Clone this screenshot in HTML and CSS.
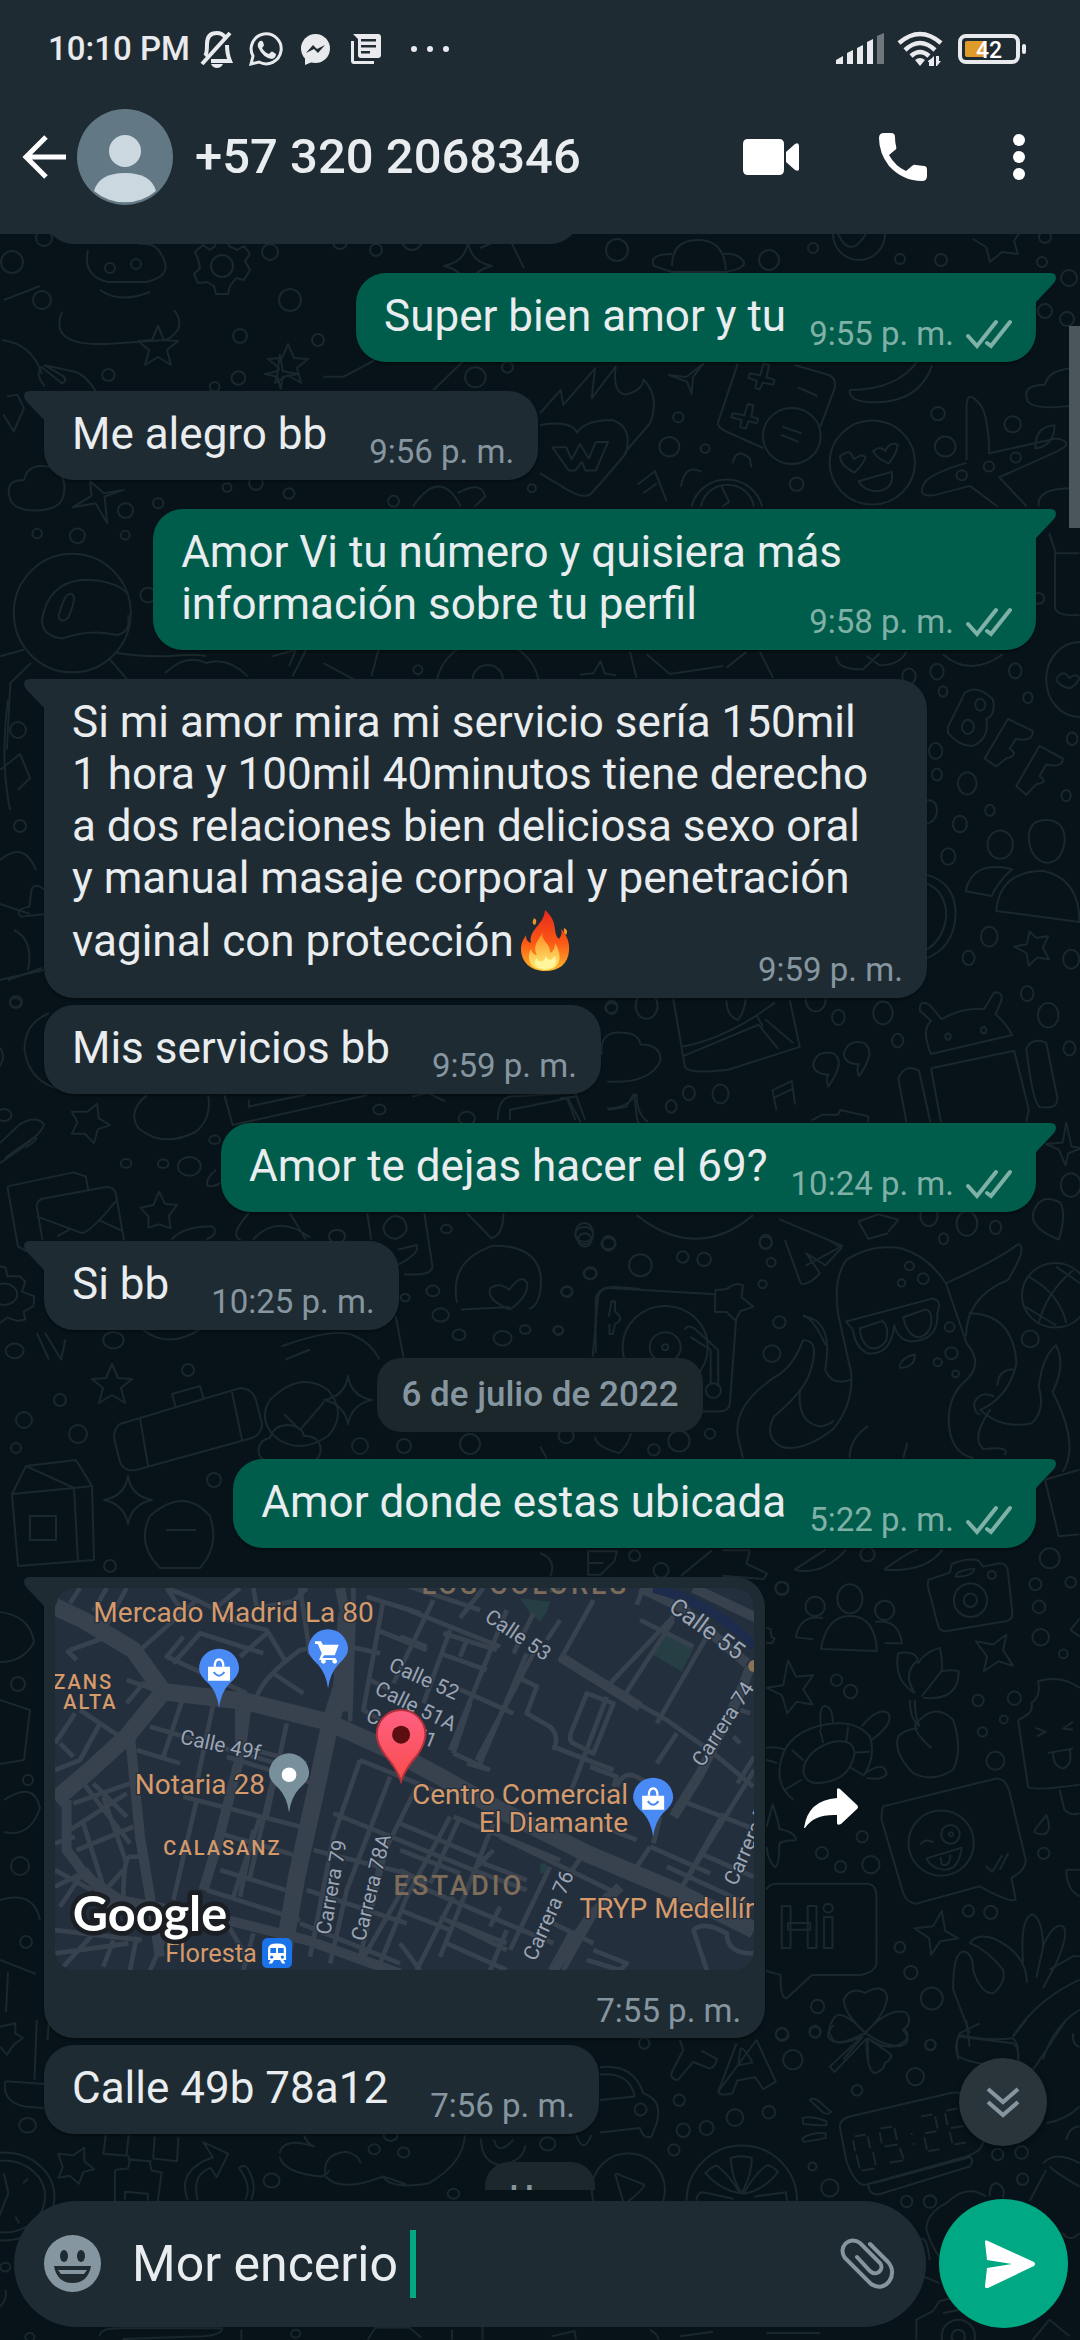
FILE: index.html
```html
<!DOCTYPE html>
<html lang="es">
<head>
<meta charset="UTF-8">
<meta name="viewport" content="width=device-width, initial-scale=1.0">
<title>Chat</title>
<link rel="stylesheet" href="styles.css">
</head>
<body>

<!-- Fondo con dibujos -->
<svg class="wallpaper" viewBox="0 0 1080 2340" preserveAspectRatio="xMidYMin slice" aria-hidden="true">
  <defs>
    <path id="star" d="M0-20 6-6 20-5 9 4 13 19 0 11-13 19-9 4-20-5-6-6Z"/>
    <path id="spark" d="M0-24Q3-4 24 0 4 4 0 24-4 4-24 0-3-4 0-24Z"/>
    <path id="cloud" d="M-22 14C-36 10-34-8-20-10-16-28 12-26 14-12 34-14 36 12 20 14Q0 20-22 14Z"/>
    <path id="note" d="M-8 14V-14L14-20V8M-8-6 14-12M-8 14A6 5 0 1 1-14 9Q-10 9-8 14M14 8A6 5 0 1 1 8 3Q12 3 14 8"/>
    <path id="heart" d="M0 14C-30-6-14-24 0-10 14-24 30-6 0 14Z"/>
    <g id="people"><ellipse cy="-34" rx="13" ry="15"/><path d="M-30 18Q-24-16 0-16 26-16 28 20Z"/><circle cx="-36" cy="-26" r="10"/><path d="M-38 8-56 6Q-52-18-28-14"/><circle cx="36" cy="-22" r="10"/><path d="M36 12 54 12Q50-14 26-10"/></g>
    <g id="gear"><path d="M-5-28H5L7-20 15-16 22-20 28-12 23-5 28 4 22 14 14 12 8 20 6 28H-6L-8 20-15 16-24 17-28 8-22 2-24-7-27-14-19-21-12-16-7-20Z"/><circle r="11"/></g>
  </defs>

  <!-- zona superior -->
  <use href="#gear" x="222" y="266"/><use href="#spark" x="468" y="266"/>
  <path d="M88 250q-6 26 20 32l38 0q28-6 16-26-6-14-22-12-2-22-24-18-18 2-14 18M62 312q-14 34 44 32l60-4q22-12 8-30M100 290q20 14 50 2"/>
  <circle cx="110" cy="268" r="5"/><circle cx="136" cy="264" r="5"/>
  <circle cx="270" cy="252" r="8"/><circle cx="44" cy="238" r="8"/><circle cx="340" cy="242" r="7"/><circle cx="376" cy="250" r="6"/><circle cx="412" cy="240" r="10"/><circle cx="12" cy="262" r="11"/><circle cx="290" cy="300" r="11"/><circle cx="42" cy="300" r="9"/><circle cx="318" cy="340" r="6"/><circle cx="240" cy="336" r="7"/>
  <use href="#star" x="288" y="364"/><use href="#star" x="158" y="346"/>
  <path d="M2 340q30 4 40 34M4 300l36-14M480 248l28-12 16 32"/>
  <g transform="translate(600)">
    <circle cx="17" cy="250" r="11"/><circle cx="169" cy="260" r="10"/><circle cx="213" cy="248" r="5"/><circle cx="300" cy="259" r="5"/><circle cx="341" cy="260" r="6"/><circle cx="442" cy="262" r="5"/><circle cx="445" cy="237" r="6"/><circle cx="469" cy="278" r="8"/><circle cx="445" cy="311" r="7"/><circle cx="467" cy="319" r="7"/>
    <path d="M72 266q0-26 26-26t28 30M72 254q-24 0-18 12l18 6h54q20-4 18-10-6-10-22-8M233 234a26 26 0 1 0 52 0M238 234q12 26 28 0M373 239l13 8 4 15 12-10 16 2-4-13 6-9"/>
  </g>

  <!-- zona "Me alegro" -->
  <g transform="translate(0 360) scale(.344 .333)">
    <circle cx="315" cy="45" r="18"/><circle cx="693" cy="54" r="20"/><circle cx="624" cy="80" r="14"/><circle cx="1382" cy="52" r="30"/><circle cx="1475" cy="22" r="16"/><circle cx="660" cy="383" r="13"/><circle cx="744" cy="370" r="20"/><circle cx="840" cy="401" r="16"/><circle cx="460" cy="430" r="15"/><circle cx="365" cy="452" r="22"/><circle cx="108" cy="521" r="14"/><circle cx="225" cy="528" r="22"/><circle cx="364" cy="526" r="13"/><circle cx="1144" cy="424" r="16"/><circle cx="1546" cy="385" r="12"/><circle cx="1215" cy="930" r="13"/><circle cx="430" cy="706" r="22"/>
    <path d="M120 20q-20 20 10 60M120 20l60 50q20-10 0-24l-50-30 90 20q30 10 60 60M30 420q-20-60 40-60 10-50 70-40 60 20 44 90-10 40-80 42-60 0-74-32ZM770 42l36-8 8-50 8 50 46 8-46 8-6 36-10-36ZM360 390l-56 20 8 80-34-60-66 12 54-34-4-44 40 36ZM940 50l60 0 90-50M1260 90l100-100M1200 440q80-120 140 0M1330 400q70-40 80 10l-30 30M20 110l30-6 20 40-30 70-30-50"/>
    <ellipse cx="210" cy="760" rx="170" ry="178"/><path d="M370 700q-40-40-130-40-100 10-118 120 0 50 60 56 80-30 160-10 40-10 30-60M170 770q20-80 40-66 14 10-12 70-20 20-28-4M0 890l70-20M340 880q60 10 140 10 100-10 120 0M320 900l50 60M90 910l-60 60-10 200M480 940q60-60 120-30 60-20 120 40M790 890l70-20-20 50M850 950l40-80M940 910l90 50M1080 950l20-80"/>
    <circle cx="1418" cy="960" r="44"/><circle cx="1418" cy="990" r="150"/>
  </g>
  <g transform="translate(540 360) scale(.344 .333)">
    <path d="M0 160 60 90 68 135 160 25 150 115 220 20Q210 100 250 104 300 90 300 58 350 110 320 190L245 280M0 195Q90 180 108 218 130 180 210 180 270 200 250 280 210 330 150 400 130 420 80 390L0 340M36 262h40l16 36 24-46 26 44 20-50h36l-36 86h-30l-10-26-20 26H84Z"/>
    <path d="M375 45l50 6 50-40-30 40-4 50-14-36ZM575 10 520 180Q510 200 540 214L650 265M740 15 840 45Q865 60 855 90L815 200M610 40l30 6 10-36 16 6-8 36 24 8-4 14-30-6-10 20-12-4 4-22-24-8ZM560 160l34 6 10-34 16 4-6 34 20 6-4 14-24-6-8 22-16-4 4-22-30-8Z"/>
    <circle cx="732" cy="228" r="84"/><path d="M704 200l56 20M700 224l52 22M750 82l56 26M900 90q-4 30 50 36 150 10 190-110M900 90q140 0 200-90"/>
    <ellipse cx="966" cy="308" rx="124" ry="126"/><path d="M872 290q30-30 40 8 30-20 34-4-10 24-32 44-40-20-42-48ZM968 274q20-20 36 0 10-30 36-20-4 30-26 56-30-10-46-36ZM926 364l96-28q10 50-40 58-40 0-56-30Z"/>
    <path d="M1240 300V140q0-60 44 0 20 40 22 140L1500 236q60 10 0 40L1335 352 1415 440M1330 440 1250 378 1150 405q-60 10-30-40 30-30 120-56M1440 260q0-60 56-64 0 60-56 70ZM1568 24q-90 0-100 50-70 0-50 50 20 30 150 10M1450 440q-10-60 118-54M1480 520l20 60h68M1497 580v160q0 30 71 26"/>
    <circle cx="402" cy="172" r="15"/><circle cx="376" cy="260" r="29"/><circle cx="480" cy="266" r="13"/><circle cx="746" cy="373" r="20"/><circle cx="1157" cy="161" r="20"/><circle cx="1178" cy="260" r="30"/><circle cx="1374" cy="193" r="24"/><circle cx="1383" cy="293" r="15"/><circle cx="1305" cy="320" r="15"/><circle cx="1226" cy="346" r="15"/><circle cx="1450" cy="716" r="16"/>
    <path d="M440 440a106 106 0 0 1 206 0M468 440a78 78 0 0 1 154 0M526 376l24 50-20 14M410 380q10-70 60-44M560 310q10-50 50-14l4 26M284 374l50-40 34 90M300 400l40-30"/>
  </g>

  <!-- margen izquierdo y derecho del mensaje largo -->
  <path d="M8 700q-8 60 2 110M0 860q24-20 36 10M0 904l30 10M0 770l20-16 10 24-12 12M8 980l34-12M0 1048q6 8 0 18M14 930q20 10 14 40"/>
  <circle cx="18" cy="730" r="8"/><circle cx="20" cy="826" r="6"/><circle cx="16" cy="1002" r="6"/>
  <g transform="translate(560 640) scale(.333 .395)">
    <circle cx="1048" cy="92" r="20"/><circle cx="1132" cy="80" r="20"/><circle cx="1150" cy="130" r="13"/><circle cx="1367" cy="78" r="19"/><circle cx="1405" cy="146" r="14"/><circle cx="1128" cy="281" r="20"/><circle cx="1132" cy="341" r="15"/><circle cx="1223" cy="363" r="28"/><circle cx="1291" cy="431" r="14"/><circle cx="1201" cy="466" r="21"/><circle cx="1166" cy="548" r="21"/><circle cx="1520" cy="394" r="14"/><circle cx="1538" cy="250" r="16"/><circle cx="1289" cy="751" r="25"/><circle cx="1227" cy="805" r="18"/><circle cx="1535" cy="808" r="24"/><circle cx="1403" cy="895" r="19"/><circle cx="1466" cy="950" r="31"/><circle cx="970" cy="944" r="29"/><circle cx="1014" cy="1014" r="17"/><circle cx="836" cy="955" r="19"/><circle cx="768" cy="910" r="30"/><circle cx="260" cy="926" r="33"/><circle cx="155" cy="930" r="17"/><circle cx="387" cy="1147" r="18"/><circle cx="334" cy="1181" r="16"/><circle cx="482" cy="1149" r="24"/><circle cx="1530" cy="1034" r="18"/><circle cx="73" cy="1503" r="27"/><circle cx="146" cy="1527" r="19"/><circle cx="618" cy="1524" r="18"/><circle cx="1108" cy="1458" r="26"/><circle cx="1222" cy="1477" r="31"/><circle cx="1308" cy="1487" r="17"/><circle cx="1152" cy="1516" r="14"/><circle cx="1534" cy="1380" r="30"/>
    <path d="M1165 220 1215 135Q1250 110 1300 150 1310 190 1280 200 1290 250 1240 268 1200 270 1165 235ZM1275 300 1345 200 1420 230Q1420 260 1370 250L1350 275Q1380 290 1340 300L1310 320ZM1370 370 1440 268 1510 300Q1510 325 1460 315L1440 345Q1470 360 1430 365L1400 392Z"/><circle cx="1262" cy="164" r="15"/><circle cx="1225" cy="220" r="18"/>
    <ellipse cx="1560" cy="100" rx="100" ry="95"/><path d="M1490 100q20-30 40-4 20-14 30 0-10 20-30 26-30-4-40-22M1100 405q34 0 32 30-4 26-32 30M1100 594q90 20 88 104-6 80-88 108M1100 616q60 20 60 84-10 60-60 84"/>
    <ellipse cx="1322" cy="518" rx="38" ry="36"/><path d="M1408 500q0-44 52-44 54 0 56 50-8 58-56 58-50-10-52-64ZM1218 636q20-80 140-56-40 30-62 68ZM1310 686q10-100 140-102 110 20 110 130Z"/>
    <path d="M1364 776 1402 770 1410 738 1430 754 1466 750 1450 778 1468 808 1434 804 1408 824 1400 792ZM1114 1048q-30-60 0-84L1080 938q0-30 30-14l36 36q60-30 128-26l30-42q30 0 20 24l-16 32q30 20 50 52ZM1114 1084 1364 1040 1408 1190 1400 1220M1114 1084 1144 1220M1400 1034q20-30 60-14l34 140q0 30-54 22-20-10-40-148M1040 1220 1016 1110q20-40 62-20l34 130"/><circle cx="1165" cy="1004" r="8"/><circle cx="1272" cy="988" r="8"/>
    <path d="M126 1050q-10-60 60-56 50 0 56 30 60 0 60 40-30 60-160 54M340 908 375 1080q10 20 130 8L720 1030 690 912M364 1030Q500 1010 645 918M368 1054 596 974 656 1036M616 960 700 1020M590 950l20 30M500 912q0 40 34 50 20-20 24-54M760 1076q10-40 60-30 40 20-14 84-10-20 0-30-40 0-46-24ZM852 1050q10-40 60-30 40 20-14 84-10-20 0-30-40 0-46-24M650 1190l-12-50 58-24 10 60M640 1160l60-24M140 1186q60 0 90-36 0 50 34 70M756 1216l30-14h48l8-12 84 16v14M22 1158l40 62M0 1160l50-4M230 1456q180 120 350 0M658 1466l190 68-110 50M896 1472l60-18 60 14-30 30M896 1472l30 44 60-14M1498 1518q-90-30-76-70 20-50 80-24 20 30-4 94ZM1460 1276l50-4 10-50 16 60 30 4-40 14-8 30-20-40ZM60 88l40-4 22-30 12 30 34 6M210 30l20 66M260 36l70 50 160-20M600 30l40 66M500 70l60-40M830 40q0 36 80 34l50-40M920 40l40 24q60 0 80-34M1150 36q80 60 180 0"/>
  </g>

  <!-- zona "Si bb" -->
  <g transform="translate(0 880) scale(.408 .333)">
    <circle cx="38" cy="368" r="14"/><circle cx="10" cy="706" r="18"/><circle cx="309" cy="851" r="13"/><circle cx="400" cy="852" r="13"/><circle cx="464" cy="860" r="28"/><circle cx="526" cy="780" r="13"/><circle cx="930" cy="689" r="15"/><circle cx="1144" cy="716" r="20"/><circle cx="1498" cy="384" r="15"/><circle cx="1094" cy="1048" r="13"/><circle cx="1432" cy="1064" r="22"/><circle cx="1491" cy="1092" r="17"/><circle cx="1446" cy="1182" r="16"/><circle cx="1061" cy="1234" r="16"/><circle cx="1389" cy="1236" r="14"/><circle cx="1080" cy="1306" r="20"/><circle cx="1125" cy="1366" r="16"/><circle cx="1232" cy="1376" r="22"/><circle cx="1287" cy="1350" r="13"/><circle cx="1368" cy="1352" r="12"/><circle cx="993" cy="1254" r="11"/><circle cx="278" cy="1382" r="25"/><circle cx="36" cy="1414" r="22"/><circle cx="826" cy="1070" r="20"/>
    <path d="M110 30q-30-30-34 10l-4 40q-40 10-20 30l60-8M0 300l108-30M120 400q-60 30-60 110 10 90 80 116M176 696l38 0 24-24 4 44 28 20-30 12-10 42-22-28-32 0 14-34ZM360 646q-50 50-20 100 60 60 140 10 40-40 30-110M0 850q100-80 108-116-20-30-60 0L0 790M12 834l70-60q20 0-20 30M550 646l20 90 330-90M610 680l140-36M610 660v24M1220 720q0-60 30-70l160-10 24 80M1250 720v-30l140-34 20 64M1490 690l44-8 20-40 8 80 8 20M1010 650l40-10 40 24"/>
    <path d="M18 920 180 878 210 890 216 930M18 920 44 1100 66 1116M90 980q0-20 20-24l150-34q20 0 24 20l20 140M90 980l14 100M90 1010l110 50q20 0 84-96M140 1070l30-20M240 1020l60 34M344 984l32-8 14-40 14 36 30 4-20 32 4 38-28-12-26 10 0-34ZM590 1080q-30-10 20-80M710 1000l40 80M620 1080q60-80 140-6M420 1080q30-40 100-40 20 20-14 40M530 870q-30 30-20 50 20 0 30-10M900 1000l10 80M940 1040q20-50 50-20 20 40-20 58-30-4-30-38M1040 1000l20 160q0 30-70 24M975 1110l46-14q10 24-46 60M1144 1000l60 76q30-10 30-76M1120 1270q-20-130 90-172 110 0 116 100 0 80-30 90M1130 1290l120-8M1250 1290q-60-30-48-64 20-20 46 4 30-50 44-20 4 40-42 80Z"/>
    <path d="M0 1160l14 4 4 26 30 0 14 16-8 30 30 14-2 30-24 16 4 24-20 4-24-10-18 16"/><circle cx="10" cy="1244" r="32"/>
    <path d="M90 1360l30 80M110 1360l40 80 10-60M350 1350q60 60 140 0M690 1400q140-60 180-30 40 20 60 70M700 1440l60-30M970 1310l20 130M1460 1420v-160q4-40 50-38l60 6"/>
  </g>
  <!-- zona de la fecha -->
  <path d="M12 1494 26 1466 76 1460 92 1486 94 1560 18 1566ZM12 1494 74 1488 92 1486M74 1488 78 1562M26 1466 74 1488M30 1516h26v24H30Z"/>
  <path d="M120 1424 240 1388Q252 1388 256 1400L262 1424Q262 1434 252 1438L136 1470Q124 1472 120 1462L114 1438Q114 1428 120 1424ZM140 1418 148 1466M232 1392 242 1440M176 1408l-4-14 28-8 4 14"/>
  <path d="M150 1516q34-30 60 0 10 30-10 52h-40q-24-24-10-52M166 1530h30M270 1400q30-30 58-10 20 24 0 46-30 20-54 0-16-18-4-36M284 1414l16 16 24-28M300 1472l60 16M236 1480q20-14 40 0"/>
  <use href="#star" x="112" y="1384"/><use href="#spark" x="348" y="1400"/><use href="#spark" x="128" y="1500"/><use href="#cloud" x="290" y="1448"/>
  <circle cx="24" cy="1420" r="8"/><circle cx="60" cy="1400" r="6"/><circle cx="78" cy="1434" r="9"/><circle cx="214" cy="1480" r="7"/><circle cx="360" cy="1446" r="8"/><circle cx="188" cy="1370" r="6"/><circle cx="16" cy="1448" r="5"/><circle cx="110" cy="1566" r="6"/><circle cx="404" cy="1446" r="7"/><circle cx="470" cy="1444" r="10"/>
  <!-- margen izquierdo del mapa -->
  <path d="M0 1612q30 4 34 30-10 20-34 20M0 1700l30 10-6 50-24 4M4 1800q30-20 36 8-10 30-36 24M0 1900q34-10 40 20M0 1960l36 14M8 1972l-2 40"/>
  <circle cx="18" cy="1684" r="7"/><circle cx="28" cy="1780" r="5"/><circle cx="20" cy="1866" r="9"/><circle cx="26" cy="1942" r="6"/>

  <g transform="translate(540 1240) scale(.344 .333)">
    <circle cx="130" cy="0" r="20"/><circle cx="200" cy="10" r="20"/><circle cx="292" cy="76" r="33"/><circle cx="415" cy="51" r="17"/><circle cx="477" cy="58" r="20"/><circle cx="147" cy="100" r="18"/><circle cx="79" cy="155" r="16"/><circle cx="54" cy="272" r="13"/><circle cx="656" cy="8" r="18"/><circle cx="672" cy="67" r="13"/><circle cx="647" cy="133" r="12"/><circle cx="696" cy="247" r="18"/><circle cx="674" cy="341" r="25"/><circle cx="1074" cy="78" r="13"/><circle cx="1114" cy="116" r="16"/><circle cx="1051" cy="129" r="11"/><circle cx="1191" cy="261" r="14"/><circle cx="1196" cy="340" r="18"/><circle cx="1156" cy="367" r="12"/><circle cx="1208" cy="402" r="10"/><circle cx="1425" cy="297" r="25"/><circle cx="494" cy="582" r="15"/><circle cx="404" cy="604" r="31"/><circle cx="331" cy="630" r="17"/><circle cx="76" cy="588" r="22"/><circle cx="275" cy="948" r="16"/><circle cx="352" cy="992" r="22"/><circle cx="703" cy="1046" r="18"/><circle cx="952" cy="944" r="21"/>
    <path d="M153 350 168 180Q170 140 210 145L510 163M570 240 552 490Q550 515 520 515H470M510 150q36 0 42-10 20-14 38-4l-4 36 34 28-38 14-14 28-26-26-34 0ZM200 230l8-46h10l0 30q30 26 0 38l-6 30-10 0V252"/><circle cx="364" cy="322" r="124"/><circle cx="364" cy="322" r="45"/><circle cx="364" cy="322" r="9"/><path d="M420 270q10-20 34 0l64 60v110M436 290l60 40v100"/><circle cx="504" cy="452" r="22"/>
    <path d="M712 0l46 130q20 10 56-30l-40-60 56 36 46-52-30-20M868 230Q850 120 890 60 960 10 1050 25 1130 50 1180 130L1240 310Q1290 370 1240 420 1190 460 1188 540 1190 640 1260 655M868 230 905 400Q910 500 850 570 760 640 700 620 650 590 680 530 760 460 780 410 820 300 765 300 740 370 700 400 560 490 575 590L590 655M765 230q90 10 64 160 20 50 74 30M756 450q-10 100 60 110 40-10 36-20M765 226q30 10 66 90"/>
    <path d="M890 245 1140 176Q1170 180 1155 220 1160 300 1080 305 1040 300 1030 255 1020 350 950 340 915 320 910 270ZM930 265l66-22q20 20 10 60-20 30-50 20-26-20-26-58ZM1056 232l66-24q20 6 14 50-10 34-40 34-30-10-40-60ZM1044 380q10-30 46-36 0 40-46 40M1180 130Q1330 60 1390 12 1420 20 1360 120 1240 170 1238 290M1245 220q130 0 140 150-20 100-105 140 60 60 150 40 40-40 20-110 10-90 50-124 30 60-10 140 80 160 30 240M1310 508q-60 90-20 120 80-10 60 18M1380 388q-50 0-50 50M1320 470q-40-20-58 20 0 30 18 34M900 655q0-60 54-96M1056 655l12-46M0 620l20 36M160 590q0 30 70 50 30-30 34-60"/>
    <circle cx="1498" cy="166" r="97"/><path d="M1420 110q90 50 110 140M1450 250q20-90 100-160M1410 200l90 56M1500 80l70 50"/>
    <path d="M410 1008l90-76M530 932l80 0-10 40 60 30-10 16-120-10M140 935h84l-8 30-40 40-36 0ZM140 970h44M740 990q60-40 90-60M740 990q80 20 150-60M1000 990q80-60 100-60M1000 990q120 10 170-60M1468 720l100-30M1468 720l40 170 60-6M0 940q50 20 30 70"/>
  </g>

  <!-- a la derecha del mapa -->
  <g transform="translate(740 1540) scale(.333)">
    <circle cx="126" cy="145" r="20"/><circle cx="930" cy="55" r="30"/><circle cx="887" cy="133" r="18"/><circle cx="993" cy="127" r="16"/><circle cx="898" cy="201" r="19"/><circle cx="903" cy="292" r="25"/><circle cx="290" cy="421" r="17"/><circle cx="332" cy="455" r="20"/><circle cx="715" cy="482" r="17"/><circle cx="824" cy="475" r="20"/><circle cx="792" cy="539" r="12"/><circle cx="728" cy="576" r="14"/><circle cx="767" cy="663" r="27"/><circle cx="367" cy="891" r="17"/><circle cx="246" cy="940" r="18"/><circle cx="302" cy="981" r="17"/><circle cx="393" cy="975" r="26"/><circle cx="912" cy="941" r="17"/><circle cx="686" cy="1114" r="17"/><circle cx="753" cy="1118" r="20"/><circle cx="480" cy="1223" r="16"/><circle cx="513" cy="1299" r="20"/><circle cx="576" cy="1377" r="33"/><circle cx="233" cy="1401" r="20"/><circle cx="225" cy="1476" r="17"/><circle cx="126" cy="1483" r="18"/><circle cx="971" cy="342" r="13"/><circle cx="572" cy="1516" r="15"/>
    <use href="#people" transform="translate(330 275) scale(2.9)"/>
    <path d="M565 120l65-22 6-26q50-20 80-10l14 18 50-10q20 0 24 20l14 130q0 20-20 24l-180 30q-20 0-24-20l-30-114Z"/><circle cx="692" cy="181" r="50"/><circle cx="692" cy="181" r="20"/><path d="M648 104q10-14 56-18-4 24-56 24Z"/><circle cx="756" cy="105" r="12"/>
    <path d="M708 304l52 10 40-30-10 46 30 48-44-14-44 30 10-44ZM80 444l50-8 14-74 24 48 52-4-30 42 28 46-48-8-28 34-16-54ZM525 460Q460 420 475 340q60-10 60 30 20-34 65-46 10 40 5 70 30-6 52 0 0 90-106 80M525 460q-40-60 10-100M545 470l60-76M510 480q0 60 30 80M525 480q0 50 14 80M575 625Q500 560 540 540 590 490 640 540 670 630 640 690 580 730 520 700 460 640 475 590 490 570 535 565"/>
    <path d="M120 680q10-90 110-120 110-30 160 30 20 60-20 120M120 680q-10 60 40 100M190 690q10-60 90-84 60-10 64 34-10 60-60 80-90 30-94-30ZM240 570l10 40M325 560l-6 46M390 636l-44 2M330 682l40 24M135 750l50-30M155 630l36 32M244 568q-10-70 14-70 24 10 20 56M365 560q50-60 80-40 20 30-54 84M376 700q60-40 64 4-20 20-60 10M78 624q30-6 60 6M78 660l34 10"/>
    <path d="M430 800 770 716Q800 716 810 760L858 960Q860 990 815 1015L828 1080Q810 1090 720 1040L530 1092Q500 1090 490 1060L425 840Q425 810 430 800Z"/><ellipse cx="604" cy="910" rx="98" ry="98"/><circle cx="632" cy="884" r="28"/><circle cx="634" cy="884" r="6"/><path d="M542 914q14-20 40-6M560 956l106-32q-10 70-54 66-40-4-52-34ZM602 952l4 22q24 10 26-30M738 980l20 16 30-50M780 990l26-50"/>
    <path d="M78 1050q10-18 30-18H380q30 0 30 40V1270q-4 30-50 36H216L140 1376q-20 0-18-70-40-10-44-14M524 1166l56-6 26-46 10 60 40 22-56 10-26 40-6-50ZM80 860l18-66q20 60 20 74 50 10 50 34-40 0-50 10 0 70-14 70-20-20-24-60"/>
    <path d="M376 1480Q310 1420 312 1380 330 1340 376 1360 430 1330 442 1370 440 1420 376 1480ZM376 1480Q300 1400 280 1440 260 1470 274 1490 280 1530 376 1480ZM376 1480Q450 1400 500 1420 520 1450 490 1472 520 1510 480 1520 430 1520 376 1480ZM370 1490l-60 70M384 1500v60"/>
    <path d="M690 1480 640 1350Q640 1240 670 1236 700 1240 700 1290 720 1360 760 1362 800 1330 790 1290 740 1230 690 1210 710 1180 760 1196 860 1240 862 1330M850 1270q-10-140 30-146 30 20 30 100l-20 90M910 1220q30-70 60-60 20 20-20 110l-40 76M930 1290l70-40 20 0M820 1490q70-110 200-170M660 1486q80 20 160 10 20 20 14 64M660 1486q-20 30-4 74M910 1560q30-100 110-150"/>
    <path d="M835 540q50-20 40-50 30-20 20-66 70-20 125 20M835 540 865 740Q870 755 1020 735M888 564l30 12-26 14M1000 546l-30 20 30 4M924 640l76-14M940 640q0 40 30 46 30-10 20-56M960 750l14 60q20 20 46 10M886 870l34-44q20 50-10 58-30 0-24-14M992 270l28-34M992 270l28 20M980 990h40M980 990q0 60 40 80M78 264l14 4 2 22 10 6-8 14-18-2"/>
    <text class="doodle-text" x="114" y="1224">Hi</text>
  </g>

  <!-- zona inferior -->
  <g transform="translate(0 2020) scale(.383 .333)">
    <circle cx="72" cy="316" r="22"/><circle cx="709" cy="482" r="21"/><circle cx="977" cy="388" r="15"/><circle cx="1054" cy="398" r="15"/><circle cx="1184" cy="522" r="15"/><circle cx="1430" cy="372" r="20"/><circle cx="14" cy="742" r="13"/><circle cx="772" cy="942" r="12"/><circle cx="78" cy="952" r="12"/><circle cx="1020" cy="345" r="18"/>
    <path d="M0 20l40-10 0 30 20 14-24 20-18 30L0 80M96 0l-6 180M128 0l-4 60M14 184l104 8M14 184q-10 60 50 76l50 4M152 402l40 4 28-22v40l26 24-28 8-12 36-24-24-30 6 12-32ZM276 346l-6 56 60 6 6-62M336 406v14l60 4M404 350l-4 66 62 8 4-72M300 450l34-4 6-28 50 6 6 28 26 6-10 86M300 450l0 94M326 540v-24l60 6v20M490 540q-30-90 66-128l-26-46 66 36-30 70-16-28q-50 20-34 96M640 540q20-40-16-96 20-20 34 30 10 30-2 66M730 400q10-50 90-20-20-10-26-34M730 410q10 50 110 60 20-10 18-20M850 470q-10-70 56-74 30 10 36 34M850 470q40 50 150 0 20 40 120 20 90-60 94-144M1000 470q30 10 60 24M1256 356q0 70 50 80 60-10 66-60M1290 360q10 50 50 0M1504 346q20 60 40 0"/>
    <circle cx="10" cy="530" r="108"/><circle cx="10" cy="530" r="132"/><path d="M10 460l12 60-24 70M60 490l14-14M40 590l10 20M0 860q20-20 14-50M260 950q0-24 50-24l270 0q0 20-50 24l-210 8M630 930v30M960 960l20-36 90 0 30 30M1180 930v30M1440 950l60-16 4 26M1260 920v40"/>
  </g>
  <g transform="translate(600 2020) scale(.333)">
    <circle cx="547" cy="44" r="19"/><circle cx="646" cy="37" r="16"/><circle cx="133" cy="70" r="16"/><circle cx="579" cy="119" r="29"/><circle cx="947" cy="170" r="26"/><circle cx="992" cy="75" r="16"/><circle cx="772" cy="211" r="16"/><circle cx="238" cy="241" r="17"/><circle cx="405" cy="293" r="25"/><circle cx="507" cy="277" r="19"/><circle cx="320" cy="324" r="21"/><circle cx="250" cy="331" r="20"/><circle cx="222" cy="390" r="17"/><circle cx="638" cy="440" r="12"/><circle cx="690" cy="504" r="26"/><circle cx="921" cy="545" r="17"/><circle cx="991" cy="545" r="19"/><circle cx="1194" cy="404" r="17"/><circle cx="1266" cy="398" r="19"/><circle cx="1269" cy="478" r="17"/>
    <path d="M688 56q-10-20 14-40M686 50q20 36 100 0L690 140l14 16 96-100Q800 150 825 160q30-10 30-30 30-20 14-30L806 56q60 40 100 14 30-20 10-40M240 60l10 30-36 70q0 20 20 20l46-54 50 20q20-10 20-30l-46-24M355 215 410 70M470 60 528 185 490 208 466 172 412 182 398 220Q360 230 355 215ZM414 136l8-50q10-6 36 42Z"/>
    <path d="M0 142Q100 130 130 220 190 240 170 310L155 350Q130 360 120 324L0 338M0 164Q90 156 104 230L0 240"/><circle cx="122" cy="269" r="18"/>
    <path d="M630 240q10-10 30 6l34 30q-10 10-24 2ZM608 294q30-6 72 10v12q-40 0-70-4ZM606 356q30-20 72-16v14q-30 8-66 12ZM720 320q0-20 30-30l300-70q60-14 80 60l20 70q10 40-50 60L800 494q-30 10-60-70ZM806 494q0 30 30 30L1110 440q16-20 0-28L820 490"/>
    <path stroke-width="2" d="M764 350l34-6M760 360l6 34M804 350l8 36M770 404l10 42M820 396l8 40M786 452l38-6M842 326l36-6M840 336l6 34M884 324l8 36M854 380l40-6M900 384l12 34M870 428l40-6M964 290l34-6M1006 290l8 36M976 340l34-6M974 352l8 38M986 394l34-6M1040 272l34-6M1036 280l8 36M1054 324l38-6M1050 336l8 34M1064 374l36-6M934 340l4 4M940 370l4 4"/>
    <circle cx="85" cy="510" r="110"/><path d="M46 464q4-6 20 4l66 26q6 10-60 60ZM260 543a165 165 0 0 1 332 0M392 414q30-10 64 0 0 50-30 106-30-40-34-106ZM316 460q20-20 34-24 40 30 70 84-60-10-104-60ZM535 456q-20-20-34-20-40 30-70 86 60-10 104-66ZM290 543q0-26 20-26l90 20M562 543l-4-26-96 14M1100 0l10 80M1140 10l-60 30q-14 30-4 70 60 30 130 20M1240 50l40-50M1080 50l160 20q20 10 16 60M1300 150l100-150M1420 40q0 40 20 40M1340 310q60-10 100-50M1400 360q10-40 40-40M1330 430q40-40 110 0M1350 440q20 20 90 60M1340 450l-50 94M1170 530q0-40 20-40 30 10 20 44M980 630q0-50 60-80 60-60 120-20M980 630q20 60 40 80M960 660q20-20 30 60M970 770l50 20M950 960v-60l50-26 20-30 40-10M1390 640q20 30 50 0"/>
    <circle cx="1076" cy="950" r="50"/><circle cx="1076" cy="950" r="20"/><path d="M1030 880l50-10M240 950l100-14M150 930q30 20 24 30M500 940l160 0M1300 960l50-60 60 50"/>
  </g>
</svg>

<header class="top">
  <div class="status-bar">
    <span class="clock">10:10 PM</span>
    <svg class="st-bell" viewBox="0 0 36 38"><path fill="none" stroke="#e8eaed" stroke-width="4" d="M6 26Q8 24 8 14 8 3 18 3q5 0 8 4M28 15q0 9 3 16H12M3 34 31 3"/><path fill="#e8eaed" d="M12 34h12q-2 4-6 4t-6-4Z"/></svg>
    <svg class="st-wa" viewBox="0 0 34 34"><path fill="none" stroke="#e8eaed" stroke-width="3" d="M2 32 4 24A15 15 0 1 1 10 30Z"/><path fill="#e8eaed" d="M11 9q2-1 3 1l1 3q0 1-2 3 3 5 7 6l2-2q1-1 2 0l3 2q0 4-4 5Q14 26 9 15q-1-4 2-6Z"/></svg>
    <svg class="st-msg" viewBox="0 0 31 31"><path fill="#e8eaed" d="M5 24v7l7-3Z"/><circle cx="15.500" cy="14.500" r="14.500" fill="#e8eaed"/><path fill="#1f2a31" d="M6 19 13 11 17 15 25 11 18 19 14 15Z"/></svg>
    <svg class="st-news" viewBox="0 0 30 30"><path fill="#e8eaed" fill-rule="evenodd" d="M2 0h25q3 0 3 3v18q0 3-3 3H10q-3 0-3-3V5ZM10 5v2.500h15V5ZM10 11v2.500h15V11ZM10 17v2.500h9V17ZM0 7h3v20h20v3H3q-3 0-3-3Z"/></svg>
    <svg class="st-dots" viewBox="0 0 40 8"><g fill="#e8eaed"><circle cx="4" cy="4" r="3"/><circle cx="20" cy="4" r="3"/><circle cx="36" cy="4" r="3"/></g></svg>
    <svg class="st-signal" viewBox="0 0 48 32"><g fill="#e8eaed"><path d="M0 31V27l7-4v8ZM11 31V20l6-3v14ZM21 31V15l6-3v19ZM31 31V9l6-3v25Z"/><path opacity=".4" d="M41 31V3l7-3v31Z"/></g></svg>
    <svg class="st-wifi" viewBox="0 0 46 36"><g fill="none" stroke="#e8eaed" stroke-width="4.500"><path d="M2 12Q23-6 44 12M8 19Q23 5 38 19M14 25Q23 17 32 25"/></g><path fill="#e8eaed" d="M18 29q5-4 10 0l-5 6ZM32 35l5 0V25l-2 2-4 3v1h1ZM39 25v10l1 0 4-5-2 0v-5Z"/></svg>
    <svg class="st-battery" viewBox="0 0 68 30"><rect x="2" y="2" width="58" height="26" rx="6" fill="none" stroke="#e8eaed" stroke-width="4"/><rect x="7" y="7" width="21" height="16" rx="2" fill="#e09c2b"/><rect x="64" y="10" width="4" height="10" rx="2" fill="#e8eaed"/><text x="31" y="24" text-anchor="middle">42</text></svg>
  </div>
  <div class="toolbar">
    <button class="back" aria-label="Atrás"><svg viewBox="0 0 44 44"><path fill="none" stroke="#fff" stroke-width="5" d="M44 22H4M24 2 4 22 24 42"/></svg></button>
    <svg class="avatar" viewBox="0 0 96 96"><circle cx="48" cy="48" r="48" fill="#637885"/><circle cx="48" cy="42" r="16" fill="#ccd8df"/><path fill="#ccd8df" d="M17 82Q22 64 48 64T79 82A48 48 0 0 1 17 82Z"/></svg>
    <h1>+57 320 2068346</h1>
    <button class="video" aria-label="Videollamada"><svg viewBox="0 0 56 36"><path fill="#fff" d="M5 0H36q5 0 5 5V31q0 5-5 5H5q-5 0-5-5V5q0-5 5-5ZM43 13 52 5q4-2 4 2V30q0 3-4 1L43 23Z"/></svg></button>
    <button class="call" aria-label="Llamar"><svg viewBox="0 0 48 48"><path fill="#fff" d="M5 0h7q4 0 4 4 0 5 1 9 1 3-1 4l-6 5q6 11 17 16l6-5q2-2 4-1l8 1q3 0 3 4v6q0 5-5 5Q24 48 10 33 0 20 0 5 0 0 5 0Z"/></svg></button>
    <button class="more" aria-label="Más opciones"><svg viewBox="0 0 12 46"><g fill="#fff"><circle cx="6" cy="6" r="6"/><circle cx="6" cy="23" r="6"/><circle cx="6" cy="40" r="6"/></g></svg></button>
  </div>
</header>

<main class="messages">
  <div class="bubble-end"></div>

  <div class="bubble out tail">Super bien amor y tu<span class="meta">9:55 p. m.<svg class="ticks" viewBox="0 0 46 30"><path d="M2 17 11 27 30 3M21 24 25 27 44 3"/></svg></span></div>

  <div class="bubble in tail">Me alegro bb<span class="meta">9:56 p. m.</span></div>

  <div class="bubble out tail">Amor Vi tu número y quisiera más información sobre tu perfil<span class="meta">9:58 p. m.<svg class="ticks" viewBox="0 0 46 30"><path d="M2 17 11 27 30 3M21 24 25 27 44 3"/></svg></span></div>

  <div class="bubble in tail has-emoji">Si mi amor mira mi servicio sería 150mil 1 hora y 100mil 40minutos tiene derecho a dos relaciones bien deliciosa sexo oral y manual masaje corporal y penetración vaginal con protección<svg class="emoji" viewBox="0 0 62 62" role="img" aria-label="Fuego">
      <defs><linearGradient id="fire" x1="0" y1="0" x2="0" y2="1"><stop offset="0" stop-color="#e8281c"/><stop offset=".55" stop-color="#fb5a15"/><stop offset="1" stop-color="#fdb92d"/></linearGradient><linearGradient id="fire2" x1="0" y1="0" x2="0" y2="1"><stop offset="0" stop-color="#fd8a1f"/><stop offset="1" stop-color="#fff176"/></linearGradient></defs>
      <path fill="url(#fire)" d="M31 0C45 12 38 23 45 29 48 25 48 22 47 19 53 25 56 33 55 41 54 54 45 61 31 61 17 61 7 52 7 39 7 32 10 29 12 25 12 30 14 32 17 33 14 20 30 15 31 0Z"/>
      <path fill="url(#fire2)" d="M29 22C26 31 37 33 36 43 40 41 41 37 41 33 47 42 50 59 31 60 13 59 13 46 17 39 18 43 20 45 23 45 18 35 25 30 29 22Z"/>
      <path fill="#fff59d" d="M32 43Q31 50 37 50L41 46Q45 58 31 59 18 58 22 48 26 53 29 51 32 48 32 43Z"/>
      <path fill="#f0932b" d="M20 8q4 2 1 7-4-1-1-7ZM50 18q5 2 2 7-3-2-2-7Z"/>
    </svg><span class="meta">9:59 p. m.</span></div>

  <div class="bubble in">Mis servicios bb<span class="meta">9:59 p. m.</span></div>

  <div class="bubble out tail">Amor te dejas hacer el 69?<span class="meta">10:24 p. m.<svg class="ticks" viewBox="0 0 46 30"><path d="M2 17 11 27 30 3M21 24 25 27 44 3"/></svg></span></div>

  <div class="bubble in tail">Si bb<span class="meta">10:25 p. m.</span></div>

  <div class="day">6 de julio de 2022</div>

  <div class="bubble out tail">Amor donde estas ubicada<span class="meta">5:22 p. m.<svg class="ticks" viewBox="0 0 46 30"><path d="M2 17 11 27 30 3M21 24 25 27 44 3"/></svg></span></div>

  <div class="location-row">
    <div class="bubble in tail location">
      <svg class="map" viewBox="45 54 2097 1146" role="img" aria-label="Ubicación">
        <defs>
          <path id="pin" d="M0 115Q-6 70-30 44-60 18-60-2A60 60 0 0 1 60-2Q60 18 30 44 6 70 0 115Z"/>
          <g id="bag"><path fill="#fff" d="M-33-8h66v42h-66Z"/><path fill="none" stroke="#fff" stroke-width="7" d="M-13-8q0-22 13-22t13 22"/><path fill="none" stroke="#4a8af4" stroke-width="6" d="M-16 8q16 22 32 0"/></g>
          <linearGradient id="red" x1="0" y1="0" x2="0" y2="1"><stop offset="0" stop-color="#ff6182"/><stop offset="1" stop-color="#f94c4c"/></linearGradient>
        </defs>
        <rect x="45" y="54" width="2097" height="1146" fill="#242f3e"/>
        <path fill="#263f44" d="M1440 85l90 10-10 30-20 30-30-25ZM1870 190l90 45-35 70-85-50ZM1500 880l20 0 0 30-20 0Z"/>
        <g class="road-minor">
          <path d="M120 54 90 100M200 54l-40 70M260 54l-60 110M380 54l60 90M80 240l30 30M90 240l140-50M300 240l170-150 120 60M470 90l-90-36M430 200l-50 60 240 110M400 280l80-90 190 60M560 150l120 30 60 100M520 120l80-66M640 54l10 60 110-20 40-40M780 54l30 200M680 190l-80 70M650 380q20-60 130-140l60-10M700 310l90 60M940 54v100l-10 300M980 80l160 50M1030 90l-60 330 50 30M930 230l90 20M1010 180l150 60M990 330l60 30"/>
          <path d="M430 380 370 560M520 400l-50 240M330 470l380 110M290 540l130 40M740 460l-60 280M560 560l260 80M640 540l160 40M430 680l390 100M470 690l-70 300M700 620l-70 300M660 740l-80 240M540 790l240 70M540 900l230 70M500 960l280 90M640 780l-40 200M260 330l90 30M260 400l50-60 30 20M45 520l60-90M120 420l120 80M180 460l-60 110-75 30M100 560l-40-40"/>
          <path d="M130 640l140 180M90 780l170-110M160 640l100 100M100 700l170-60M110 840l170-70M130 760l70 220M190 680l70 200M45 820l60-20M45 900l110 60M45 950l80-40M60 1010l60-90M250 990q0-130 20-130l40 0M160 1000l90-100M45 1080l260 30M70 1190l100-110M190 1190l30-80M45 1150l220-30M270 1200l20-100M330 1200l50-110M560 1060l60 100M640 1090l-30 110"/>
          <path d="M960 570 880 800 810 1160M1050 620 920 960 870 1180M880 730l420 170M960 570l220 90M1130 650l-90 180-80 330M820 840l280 70M800 960l300 100M780 1060l300 120M960 1180l150-260M1020 870l-40 200M1230 740 1100 980M1100 980l-80 200"/>
          <path d="M1080 40l240 80M1080 110l300 120M1180 90 1060 340M1230 180 1150 400M1080 200l80 30M1200 250l140 50M1210 190l160 50M1280 210l-20 50M1400 120 1230 540M1460 250l-140 330M1240 350l180 80M1290 400 1240 550M1240 550l110 50M1480 250 1310 570M1430 320l60 30-30 80 70 40q30 30 10 70M1540 530l180 70M1700 380l-110 290M1640 370l80 30-60 150-60-30q-20-10 0-50ZM1650 590l80 30-10 30M1350 600 1280 580M1560 60l-30 0M1330 54l-70 90M1480 130l-60 120M1560 150l-40 60M1660 90 1560 270M1710 340 1900 140M1750 380 1900 150M1850 460l150-260M1960 230l-160-80M1810 54l-20 50M1560 270l320 180 140 100 120 100"/>
          <path d="M1910 490 1850 580M2080 500l20 20M2100 420l30 10M1920 690l230 90M2142 600l-210 340M1980 850l160 70M2050 730l-130 230M1880 890l260 120M2142 560l-50 80M1860 740l-20 80M1830 830l-60 90M1830 830l180 80M1730 650q20-50 60-30l50 30M1690 770l100 40"/>
          <path d="M1360 760 1200 1160M1080 760l260 110M1080 840l180 70M1380 800l350 170M1260 740l-90 200M1140 950l400 170M1240 740l320 130M1330 880l130 50M1360 840l-60 60 160 60M1530 890 1410 1140M1630 850l-40 60M1380 1010l-30 60M1200 1040l200 100M1240 980 1130 1200M1220 1120l180 80M1250 1060l150 60M1400 1080l-50 120M1080 1020l150 60M1590 1090l-60 110M1700 970 1570 1200M1540 1060l120 60M1660 1140l100 40-20 20-100-30M1080 1120l60 80M2000 1200l-40-120q30-30 100 10 0 60 80 60M1080 900l80 40"/>
        </g>
        <path class="road-mid" d="M600 400 600 560 530 830 490 960M270 500l30 300 60 360M80 690v150l60 80 100 70 320 60 240 60 280 100M1540 1200l110-160 90-90M1900 740l80-130 120-240 30-80M620 400l-20 160M1560 260 1800 410M900 54l30 150-20 220M1800 54l120 56 200 170M1960 54l190 90M130 900l90 110"/>
        <path class="river" d="M1840 54Q2020 100 2142 230"/>
        <path class="road-main" d="M45 110 130 150 280 240 370 365 620 395 860 455 1060 545 1200 620 1380 720 1640 850 1900 960 2142 1080M370 365 260 500 150 600 45 690M870 460 830 650 770 920 730 1150M920 130 905 350 870 460"/>
        <circle cx="2142" cy="288" r="18" fill="#8b7355"/>
        <g class="street">
          <text transform="translate(418 520) rotate(12)">Calle 49f</text>
          <text transform="translate(1042 300) rotate(24)">Calle 52</text>
          <text transform="translate(1000 370) rotate(26)">Calle 51A</text>
          <text transform="translate(974 452) rotate(22)">Calle 51</text>
          <text transform="translate(1330 150) rotate(34)">Calle 53</text>
          <text class="big" transform="translate(1882 120) rotate(36)">Calle 55</text>
          <text transform="translate(870 1096) rotate(-80)">Carrera 79</text>
          <text transform="translate(974 1116) rotate(-76)">Carrera 78A</text>
          <text transform="translate(1486 1176) rotate(-66)">Carrera 76</text>
          <text transform="translate(1988 594) rotate(-57)">Carrera 74</text>
          <text transform="translate(2088 950) rotate(-66)">Carrera 73</text>
        </g>
        <g class="place">
          <text x="160" y="156">Mercado Madrid La 80</text>
          <text x="284" y="672">Notaria 28</text>
          <text x="1764" y="702" text-anchor="end">Centro Comercial</text>
          <text x="1764" y="786" text-anchor="end">El Diamante</text>
          <text x="1618" y="1044">TRYP Medellín</text>
          <text class="station" x="376" y="1176">Floresta</text>
        </g>
        <g class="area">
          <text x="40" y="357">ZANS</text>
          <text x="70" y="417">ALTA</text>
          <text x="370" y="855">CALASANZ</text>
        </g>
        <g class="district">
          <text x="1060" y="974">ESTADIO</text>
          <text x="1144" y="72">LOS COLORES</text>
        </g>
        <use href="#pin" x="537" y="298" fill="#4a8af4"/><use href="#bag" x="537" y="298"/>
        <use href="#pin" x="864" y="240" fill="#4a8af4"/><path fill="#fff" d="M825 214h18l5 10h48l-12 32h-32l-5 8h40v6h-50l8-20-12-28h-8Z"/><circle cx="850" cy="274" r="7" fill="#fff"/><circle cx="884" cy="274" r="7" fill="#fff"/>
        <use href="#pin" x="1839" y="685" fill="#4a8af4"/><use href="#bag" x="1839" y="685"/>
        <use href="#pin" x="747" y="612" fill="#78909c"/><circle cx="747" cy="614" r="22" fill="#fff"/>
        <path fill="url(#red)" stroke="#b3313b" stroke-width="6" d="M1083 634Q1070 595 1035 555 1010 520 1010 493A73 73 0 0 1 1156 493Q1156 520 1132 555 1096 595 1083 634Z"/><circle cx="1083" cy="494" r="27" fill="#5c0e10"/>
        <rect x="666" y="1104" width="90" height="90" rx="16" fill="#1a73e8"/><path fill="#fff" d="M684 1136q0-16 27-16t27 16v34h-8l6 10h-10l-6-10h-18l-6 10h-10l6-10h-8Z"/><path fill="#1a73e8" d="M691 1134h17v15h-17ZM714 1134h17v15h-17Z"/><circle cx="695" cy="1161" r="5" fill="#1a73e8"/><circle cx="727" cy="1161" r="5" fill="#1a73e8"/>
        <text class="google" x="98" y="1084">Google</text>
      </svg>
      <span class="meta">7:55 p. m.</span>
    </div>
    <button class="forward" aria-label="Reenviar"><svg viewBox="0 0 54 40"><path fill="#fff" d="M0 40Q4 12 33 10V2q0-3 3-1L53 17q2 2 0 4L37 36q-4 2-4-1V27Q10 26 1 40Z"/></svg></button>
  </div>

  <div class="bubble in">Calle 49b 78a12<span class="meta">7:56 p. m.</span></div>

  <div class="day">Hoy</div>

  <div class="scroll-thumb"></div>
  <button class="to-bottom" aria-label="Ir al final"><svg viewBox="0 0 34 32"><path fill="none" stroke="#8696a0" stroke-width="4" d="M2 3 17 16 32 3M2 16 17 29 32 16"/></svg></button>
</main>

<footer class="compose">
  <div class="field">
    <button class="smile" aria-label="Emojis"><svg viewBox="0 0 57 57"><circle cx="28.500" cy="28.500" r="28.500" fill="#8696a0"/><g fill="#1f2a31"><ellipse cx="20" cy="21" rx="4" ry="6"/><ellipse cx="37" cy="21" rx="4" ry="6"/><path d="M10 31h37Q44 48 28.500 48T10 31Z"/></g><path fill="#8696a0" d="M14 35h29l-3 4H17Z"/></svg></button>
    <input type="text" aria-label="Mensaje" value="Mor encerio">
    <span class="caret"></span>
    <button class="attach" aria-label="Adjuntar"><svg viewBox="0 0 57 52"><path fill="none" stroke="#8696a0" stroke-width="4" stroke-linecap="round" d="M31 6 49 24C60 36 47 56 32 46L6 20C-2 9 11-3 21 5L41 25C46 32 37 39 31 33L18 19"/></svg></button>
  </div>
  <button class="send" aria-label="Enviar"><svg viewBox="0 0 50 48"><path fill="#fff" d="M0 2q0-3 3-1L49 22q2 2 0 4L3 48q-3 1-3-2L2 28 27 24 2 20Z"/></svg></button>
</footer>

</body>
</html>
```
FILE: styles.css
```css
* {
  box-sizing: border-box;
}
body {
  margin: 0;
  height: 100vh;
  display: flex;
  flex-direction: column;
  position: relative;
  overflow: hidden;
  font-family: Roboto, sans-serif;
  background-color: #071318;
  color: #e9edef;
}
svg {
  display: block;
  flex-shrink: 0;
}
button {
  border: none;
  padding: 0;
  background: none;
  cursor: pointer;
  flex-shrink: 0;
}

/* Fondo */
.wallpaper {
  position: absolute;
  top: 0;
  left: 0;
  width: 100%;
  height: 100%;
  z-index: -1;
  fill: none;
  stroke: #1a272b;
  stroke-width: 2;
  stroke-linejoin: round;
}
.wallpaper * {
  vector-effect: non-scaling-stroke;
}
.doodle-text {
  font-size: 180px;
  font-weight: bold;
}

/* Cabecera */
.top {
  background-color: #1f2b32;
}
.status-bar {
  height: 98px;
  padding: 0 54px 0 48px;
  display: flex;
  align-items: center;
}
.clock {
  font-size: 33px;
  font-weight: 500;
  line-height: 40px;
  color: #e8eaed;
  margin-right: 9px;
}
.st-bell {
  width: 36px;
  margin-right: 14px;
}
.st-wa {
  width: 34px;
  margin-right: 17px;
}
.st-msg {
  width: 31px;
  margin-right: 20px;
}
.st-news {
  width: 30px;
  margin-right: 29px;
}
.st-dots {
  width: 40px;
}
.st-signal {
  width: 48px;
  margin-left: auto;
  margin-right: 13px;
}
.st-wifi {
  width: 46px;
  margin-right: 15px;
}
.st-battery {
  width: 68px;
}
.st-battery text {
  font-size: 23px;
  font-weight: 500;
  fill: #fff;
}
.toolbar {
  display: flex;
  align-items: center;
  padding: 11px 55px 29px 22px;
}
.back svg {
  width: 44px;
}
.avatar {
  width: 96px;
  margin-left: 11px;
}
.toolbar h1 {
  margin: 0 auto 0 22px;
  font-size: 49px;
  font-weight: 500;
  line-height: 56px;
}
.video svg {
  width: 56px;
}
.call {
  margin: 0 86px 0 80px;
}
.call svg {
  width: 48px;
}
.more svg {
  width: 12px;
  height: 46px;
}

/* Mensajes */
.messages {
  flex: 1;
  min-height: 0;
  position: relative;
  overflow: hidden;
  padding: 0 44px;
  display: flex;
  flex-direction: column;
  align-items: flex-start;
  gap: 7px;
}
.bubble-end {
  width: 54%;
  height: 60px;
  margin-top: -50px;
  flex-shrink: 0;
  border-radius: 30px;
  background-color: #1f2b32;
}
.bubble {
  position: relative;
  flex-shrink: 0;
  display: flow-root;
  max-width: 89%;
  padding: 17px 24px 4px 28px;
  border-radius: 30px;
  font-size: 44px;
  line-height: 52px;
  box-shadow: 0 2px 2px rgba(0, 0, 0, 0.3);
}
.in {
  background-color: #1f2b32;
}
.out {
  align-self: flex-end;
  background-color: #005d4b;
}
.tail {
  margin-top: 22px;
}
.in.tail {
  border-top-left-radius: 0;
}
.out.tail {
  border-top-right-radius: 0;
}
.tail::before {
  content: "";
  position: absolute;
  top: 0;
  width: 20px;
  height: 29px;
}
.in.tail::before {
  right: 100%;
  background-color: #1f2b32;
  clip-path: path("M20 0H6Q0 0 0 5 0 8 3 11L20 29Z");
}
.out.tail::before {
  left: 100%;
  background-color: #005d4b;
  clip-path: path("M0 0H14Q20 0 20 5 20 8 17 11L0 29Z");
}
.meta {
  float: right;
  display: flex;
  align-items: center;
  gap: 12px;
  margin: 20px 0 0 42px;
  height: 48px;
  font-size: 33px;
  line-height: 48px;
  color: #8696a0;
}
.out .meta {
  margin-left: 23px;
  color: #80b1a7;
}
.ticks {
  width: 46px;
  fill: none;
  stroke: #80b1a7;
  stroke-width: 4;
  stroke-linecap: round;
}
.emoji {
  display: inline-block;
  width: 62px;
  height: 74px;
  padding: 6px 0;
  vertical-align: -22px;
}
.has-emoji {
  padding-right: 48px;
}
.has-emoji .meta {
  margin-top: 42px;
  margin-right: -24px;
}
.day {
  align-self: center;
  flex-shrink: 0;
  margin-top: 21px;
  padding: 0 24px;
  border-radius: 24px;
  background-color: #1c272b;
  color: #8696a0;
  font-size: 35px;
  font-weight: 500;
  line-height: 74px;
}
.day + .tail {
  margin-top: 20px;
}

/* Ubicación */
.location-row {
  width: 100%;
  flex-shrink: 0;
  display: flex;
  align-items: center;
  gap: 39px;
  margin-top: 22px;
}
.location {
  width: 72.700%;
  margin-top: 0;
  padding: 11px 11px 0;
}
.map {
  width: 100%;
  border-radius: 20px;
}
.location .meta {
  margin: 17px 13px 3px 0;
}
.road-minor,
.road-mid,
.road-main,
.river {
  fill: none;
  stroke: #38424f;
  stroke-width: 14;
  stroke-linejoin: round;
}
.road-mid {
  stroke-width: 30;
}
.road-main {
  stroke-width: 52;
}
.river {
  stroke: #1d2c4c;
  stroke-width: 30;
}
.street text {
  font-size: 62px;
  fill: #9ba5b3;
  stroke: #242f3e;
  stroke-width: 8;
  paint-order: stroke;
}
.street .big {
  font-size: 72px;
}
.place text {
  font-size: 84px;
  fill: #d59a6a;
  stroke: #242f3e;
  stroke-width: 8;
  paint-order: stroke;
}
.place .station {
  font-size: 76px;
}
.area text {
  font-size: 60px;
  font-weight: 500;
  letter-spacing: 6px;
  fill: #d59a6a;
}
.district text {
  font-size: 82px;
  font-weight: 500;
  letter-spacing: 9px;
  fill: #7c6c59;
}
.google {
  font-family: Lato, sans-serif;
  font-size: 146px;
  font-weight: bold;
  fill: #fff;
  stroke: #1b1f24;
  stroke-width: 28;
  stroke-linejoin: round;
  paint-order: stroke;
}
.forward svg {
  width: 54px;
}

/* Elementos flotantes */
.scroll-thumb {
  position: absolute;
  top: 92px;
  right: 0;
  width: 11px;
  height: 202px;
  background-color: #4a565c;
}
.to-bottom {
  position: absolute;
  right: 33px;
  bottom: 44px;
  width: 88px;
  height: 88px;
  border-radius: 50%;
  background-color: #2a343b;
  box-shadow: 0 3px 6px rgba(0, 0, 0, 0.4);
}
.to-bottom svg {
  width: 34px;
  margin: 0 auto;
}

/* Escribir mensaje */
.compose {
  display: flex;
  align-items: center;
  gap: 13px;
  padding: 9px 12px 12px 14px;
}
.field {
  flex: 1;
  height: 126px;
  padding: 0 30px;
  display: flex;
  align-items: center;
  border-radius: 63px;
  background-color: #1f2b32;
}
.smile svg {
  width: 57px;
}
.field input {
  width: 278px;
  margin-left: 31px;
  padding: 0;
  border: none;
  outline: none;
  background: none;
  color: #e9edef;
  font-family: inherit;
  font-size: 50px;
}
.caret {
  width: 6px;
  height: 68px;
  background-color: #00a884;
}
.attach {
  margin-left: auto;
}
.attach svg {
  width: 57px;
}
.send {
  width: 129px;
  height: 129px;
  padding-left: 46px;
  border-radius: 50%;
  background-color: #00a884;
}
.send svg {
  width: 50px;
}
```
